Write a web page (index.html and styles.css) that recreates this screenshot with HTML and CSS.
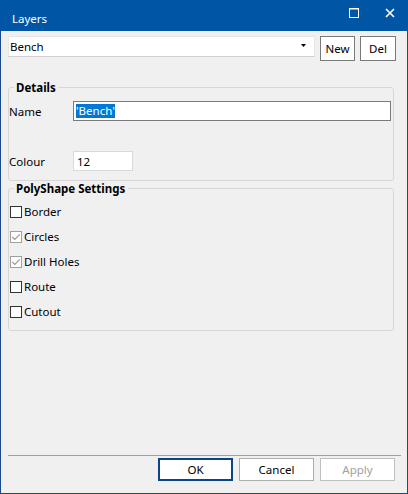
FILE: index.html
```html
<!DOCTYPE html>
<html>
<head>
<meta charset="utf-8">
<link rel="stylesheet" href="styles.css">
</head>
<body>
<div class="window">
  <div class="titlebar">
    <span class="title">Layers</span>
    <div class="controls">
      <div class="ctl"><svg width="10" height="10" viewBox="0 0 10 10"><rect x="0.5" y="0.5" width="9" height="9" fill="none" stroke="#fff" stroke-width="1"/><line x1="0" y1="1" x2="10" y2="1" stroke="#fff" stroke-width="1"/></svg></div>
      <div class="ctl"><svg width="10" height="10" viewBox="0 0 10 10"><path d="M1 1 L9 9 M9 1 L1 9" stroke="#fff" stroke-width="1.6" fill="none"/></svg></div>
    </div>
  </div>
  <div class="body">
    <div class="toprow">
      <div class="combo">
        <span class="combo-text">Bench</span>
        <svg class="arrow" width="5" height="3" viewBox="0 0 5 3"><path d="M0 0 H5 L2.5 3 Z" fill="#000"/></svg>
      </div>
      <button class="btn new">New</button>
      <button class="btn del">Del</button>
    </div>

    <fieldset class="group details">
      <legend>Details</legend>
      <div class="field">
        <span class="label">Name</span>
        <div class="textbox name-box focus"><span class="sel">'Bench'</span></div>
      </div>
      <div class="field colour">
        <span class="label">Colour</span>
        <div class="textbox colour-box">12</div>
      </div>
    </fieldset>

    <fieldset class="group poly">
      <legend>PolyShape Settings</legend>
      <div class="check"><span class="box"></span><span>Border</span></div>
      <div class="check"><span class="box checked"><svg width="10" height="10" viewBox="0 0 10 10"><path d="M1.3 5 L3.8 7.5 L8.7 2.3" stroke="#9a9a9a" stroke-width="1.2" fill="none"/></svg></span><span>Circles</span></div>
      <div class="check"><span class="box checked"><svg width="10" height="10" viewBox="0 0 10 10"><path d="M1.3 5 L3.8 7.5 L8.7 2.3" stroke="#9a9a9a" stroke-width="1.2" fill="none"/></svg></span><span>Drill Holes</span></div>
      <div class="check"><span class="box"></span><span>Route</span></div>
      <div class="check"><span class="box"></span><span>Cutout</span></div>
    </fieldset>

    <div class="spacer"></div>
    <div class="separator"></div>
    <div class="buttons">
      <button class="btn dlg default">OK</button>
      <button class="btn dlg">Cancel</button>
      <button class="btn dlg disabled">Apply</button>
    </div>
  </div>
</div>
</body>
</html>
```

FILE: styles.css
```css
html, body {
  margin: 0;
  padding: 0;
}
body {
  font-family: "Noto Sans", "Open Sans", sans-serif;
  font-size: 11.5px;
  color: #000;
  background: #f0f0f0;
}
.window {
  width: 408px;
  height: 494px;
  display: flex;
  flex-direction: column;
  background: #f0f0f0;
}
.titlebar {
  height: 31px;
  flex: none;
  background: #0055a5;
  color: #fff;
  display: flex;
  align-items: center;
}
.title {
  padding-left: 12px;
  padding-top: 6px;
}
.controls {
  margin-left: auto;
  display: flex;
  height: 100%;
}
.ctl {
  width: 36px;
  height: 100%;
  display: flex;
  align-items: center;
  justify-content: center;
  padding-bottom: 5px;
  box-sizing: border-box;
}
.body {
  flex: 1;
  min-height: 0;
  border: 1px solid #1a4a88;
  border-top: none;
  padding: 5px 6px 12px 7px;
  display: flex;
  flex-direction: column;
}
.toprow {
  display: flex;
  align-items: flex-start;
  gap: 5px;
  height: 25px;
  flex: none;
}
.combo {
  width: 307px;
  height: 21px;
  box-sizing: border-box;
  background: #fff;
  border: 1px solid #e6e6e6;
  border-bottom-color: #d0d0d0;
  display: flex;
  align-items: center;
  padding-left: 1px;
}
.combo-text {
  flex: 1;
}
.arrow {
  margin-right: 8px;
  margin-bottom: 2px;
}
.btn {
  font-family: inherit;
  font-size: 11.5px;
  background: #fff;
  border: 1px solid #7a7a7a;
  color: #000;
  padding: 0;
  margin: 0;
  box-sizing: border-box;
  border-radius: 0;
}
.new {
  width: 35px;
  height: 25px;
}
.del {
  width: 36px;
  height: 25px;
}
.group {
  margin: 0 7px 0 0;
  padding: 0;
  border: 1px solid #d7d7d7;
  border-radius: 3px;
  min-width: 0;
  flex: none;
}
.group legend {
  font-weight: bold;
  line-height: 17px;
  padding: 0 3px 0 2px;
  margin-left: 5px;
}
.details {
  margin-top: 18px;
  padding: 5px 0 9px 0;
}
.field {
  display: flex;
  align-items: center;
  height: 20px;
}
.field.colour {
  margin-top: 30px;
}
.label {
  width: 64px;
  flex: none;
}
.textbox {
  height: 20px;
  box-sizing: border-box;
  background: #fff;
  border: 1px solid #d9d9d9;
  display: flex;
  align-items: center;
  padding-left: 3px;
}
.name-box {
  width: 318px;
  border-color: #7a7a7a;
  padding-left: 2px;
}
.colour-box {
  width: 60px;
}
.sel {
  background: #0078d7;
  color: #fff;
  line-height: 14px;
  display: inline-block;
}
.poly {
  margin-top: -1px;
  padding: 2px 0 6px 0;
}
.check {
  height: 25px;
  display: flex;
  align-items: center;
  padding-left: 1px;
}
.box {
  width: 12px;
  height: 12px;
  box-sizing: border-box;
  border: 1px solid #333;
  background: #fff;
  margin-right: 2px;
  display: flex;
  align-items: center;
  justify-content: center;
}
.box.checked {
  border-color: #a0a0a0;
}
.spacer {
  flex: 1;
}
.separator {
  height: 1px;
  background: #a0a0a0;
  flex: none;
}
.buttons {
  margin-top: 2px;
  display: flex;
  justify-content: flex-end;
  gap: 6px;
  margin-right: 6px;
  flex: none;
}
.dlg {
  width: 75px;
  height: 23px;
  border-color: #adadad;
}
.dlg.default {
  border: 2px solid #0a4588;
}
.dlg.disabled {
  color: #a0a0a0;
  border-color: #bfbfbf;
}
```
